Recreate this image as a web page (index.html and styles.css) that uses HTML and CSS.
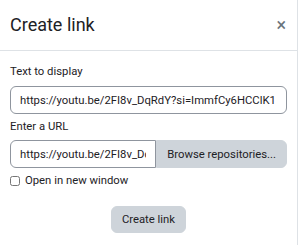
FILE: index.html
```html
<!DOCTYPE html>
<html lang="en">
<head>
  <meta charset="UTF-8">
  <title>Create link</title>
  <link rel="stylesheet" href="styles.css">
</head>
<body>
  <div class="modal">
    <div class="modal-header">
      <h2>Create link</h2>
      <button class="close" type="button" aria-label="Close">&times;</button>
    </div>
    <form class="modal-body">
      <label for="text">Text to display</label>
      <input type="text" id="text" value="https://youtu.be/2FI8v_DqRdY?si=ImmfCy6HCClK1">

      <label for="url" class="second">Enter a URL</label>
      <div class="input-group">
        <input type="text" id="url" value="https://youtu.be/2FI8v_DqRdY?si=ImmfCy6HCClK1">
        <button type="button" class="btn">Browse repositories...</button>
      </div>

      <div class="check">
        <input type="checkbox" id="newwin">
        <label for="newwin">Open in new window</label>
      </div>

      <div class="footer">
        <button type="submit" class="btn">Create link</button>
      </div>
    </form>
  </div>
</body>
</html>
```

FILE: styles.css
```css
* {
  margin: 0;
  padding: 0;
  box-sizing: border-box;
}

body {
  font-family: Roboto, 'Liberation Sans', sans-serif;
  font-size: 11.3px;
  color: #1d2125;
  background: #fff;
}

.modal {
  width: 298px;
  height: 245px;
  border-right: 1px solid #dee2e6;
}

.modal-header {
  height: 51px;
  padding: 0 10px;
  display: flex;
  align-items: center;
  justify-content: space-between;
  border-bottom: 1px solid #dee2e6;
}

h2 {
  font-size: 18px;
  font-weight: 400;
  line-height: 24px;
}

.close {
  background: none;
  border: none;
  font-family: inherit;
  font-size: 18px;
  color: #6a737b;
  line-height: 1;
  margin-right: 1px;
  cursor: pointer;
}

.modal-body {
  padding: 12px 10px 0;
  display: flex;
  flex-direction: column;
}

.modal-body > label {
  display: block;
  line-height: 18px;
  margin-bottom: 5px;
}

.modal-body > label.second {
  margin-top: 4px;
  margin-bottom: 4px;
}

input[type="text"] {
  width: 100%;
  height: 28px;
  padding: 0 9px;
  font-family: inherit;
  font-size: 11.3px;
  color: #1d2125;
  border: 1px solid #8f959e;
  border-radius: 6px;
}

.input-group {
  display: flex;
}

.input-group input {
  flex: 1;
  min-width: 0;
  border-radius: 6px 0 0 6px;
}

.btn {
  background: #ced4da;
  border: 1px solid #ced4da;
  border-radius: 6px;
  font-family: inherit;
  font-size: 11.3px;
  color: #1d2125;
  padding: 0 10px;
  height: 28px;
  cursor: pointer;
}

.input-group .btn {
  border-radius: 0 6px 6px 0;
  flex-shrink: 0;
}

.check {
  display: flex;
  align-items: center;
  gap: 5px;
  margin-top: 4px;
  line-height: 18px;
}

.check input {
  width: 10px;
  height: 10px;
  margin: 0;
}

.footer {
  display: flex;
  justify-content: center;
  margin-top: 16px;
}

.footer .btn {
  height: 27px;
}
```
